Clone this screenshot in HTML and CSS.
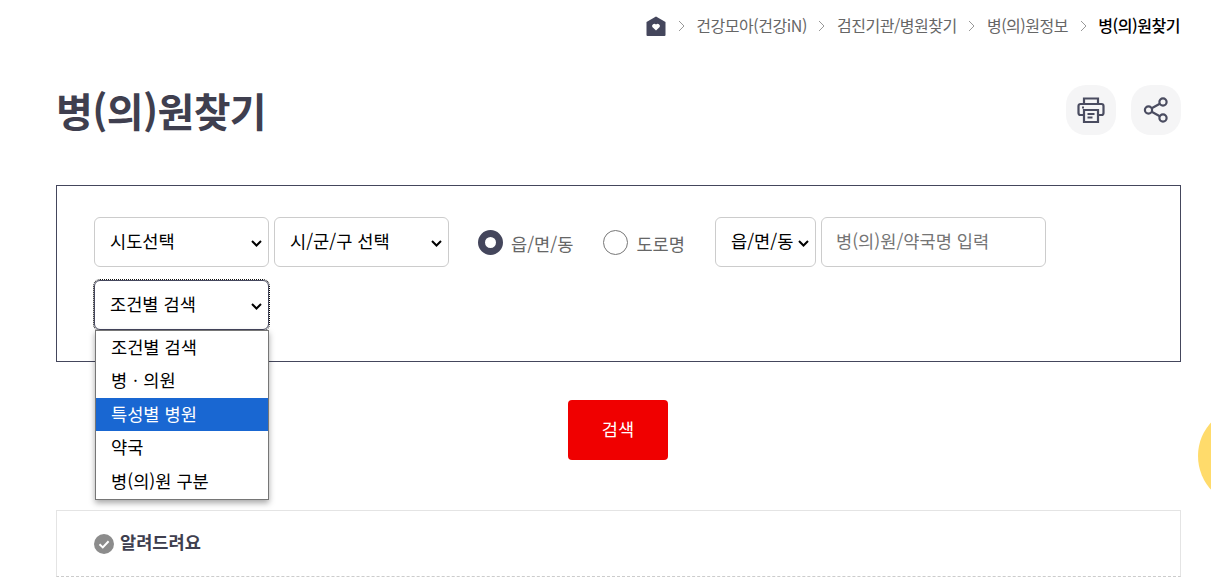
FILE: index.html
```html
<!DOCTYPE html>
<html lang="ko">
<head>
    <meta charset="UTF-8">
    <meta name="viewport" content="width=device-width, initial-scale=1.0">
    <title>병(의)원찾기</title>
    <link rel="stylesheet" href="styles.css">
</head>
<body>

<div class="container">
    <div class="breadcrumb">
        <svg class="home-icon" viewBox="0 0 20 20" width="20" height="20">
            <path d="M10 0.5 L19.5 6 V19 a1 1 0 0 1 -1 1 H1.5 a1 1 0 0 1 -1 -1 V6 Z" fill="#44465c"/>
            <path d="M10 14.6 L6.3 11 a2.3 2.3 0 0 1 3.7 -2.6 a2.3 2.3 0 0 1 3.7 2.6 Z" fill="#fff"/>
        </svg>
        <svg class="crumb-sep" viewBox="0 0 7 12" width="7" height="12"><path d="M1 1 L6 6 L1 11" fill="none" stroke="#999" stroke-width="1"/></svg>
        <span>건강모아(건강iN)</span>
        <svg class="crumb-sep" viewBox="0 0 7 12" width="7" height="12"><path d="M1 1 L6 6 L1 11" fill="none" stroke="#999" stroke-width="1"/></svg>
        <span>검진기관/병원찾기</span>
        <svg class="crumb-sep" viewBox="0 0 7 12" width="7" height="12"><path d="M1 1 L6 6 L1 11" fill="none" stroke="#999" stroke-width="1"/></svg>
        <span>병(의)원정보</span>
        <svg class="crumb-sep" viewBox="0 0 7 12" width="7" height="12"><path d="M1 1 L6 6 L1 11" fill="none" stroke="#999" stroke-width="1"/></svg>
        <span class="current">병(의)원찾기</span>
    </div>

    <div class="title-row">
        <h1>병(의)원찾기</h1>
        <div class="title-tools">
            <button class="tool-btn" aria-label="인쇄">
                <svg viewBox="0 0 28 28" width="28" height="28" fill="none" stroke="#4a4c60" stroke-width="2.2">
                    <path d="M7 8 V2.5 H21 V8"/>
                    <path d="M7 19 H3.5 a2 2 0 0 1 -2 -2 V10 a2 2 0 0 1 2 -2 H24.5 a2 2 0 0 1 2 2 V17 a2 2 0 0 1 -2 2 H21"/>
                    <path d="M7 14 H21 V26 H7 Z"/>
                    <path d="M10.5 18 H17.5 M10.5 21.5 H15.5" stroke-width="1.8"/>
                    <path d="M5 11.5 H7" stroke-width="1.8"/>
                </svg>
            </button>
            <button class="tool-btn" aria-label="공유">
                <svg viewBox="0 0 26 26" width="26" height="26" fill="none" stroke="#4a4c60" stroke-width="2.2">
                    <circle cx="5.5" cy="13" r="3.6"/>
                    <circle cx="20" cy="5" r="3.6"/>
                    <circle cx="20" cy="21" r="3.6"/>
                    <path d="M8.7 11.2 L16.8 6.8 M8.7 14.8 L16.8 19.2"/>
                </svg>
            </button>
        </div>
    </div>

    <div class="search-box">
        <select class="field w-175">
            <option>시도선택</option>
        </select>
        <select class="field w-175">
            <option>시/군/구 선택</option>
        </select>
        <div class="radio-group">
            <label class="radio-item"><input type="radio" name="addr" checked><span>읍/면/동</span></label>
            <label class="radio-item"><input type="radio" name="addr"><span>도로명</span></label>
        </div>
        <select class="field w-101">
            <option>읍/면/동</option>
        </select>
        <input class="field text-input" type="text" placeholder="병(의)원/약국명 입력">

        <div class="select-wrap">
            <select class="field w-175 focused">
                <option>조건별 검색</option>
            </select>
            <ul class="dropdown">
                <li>조건별 검색</li>
                <li>병ㆍ의원</li>
                <li class="active">특성별 병원</li>
                <li>약국</li>
                <li>병(의)원 구분</li>
            </ul>
        </div>
    </div>

    <div class="search-action">
        <button class="search-btn">검색</button>
    </div>

    <div class="notice">
        <svg viewBox="0 0 20 20" width="20" height="20">
            <circle cx="10" cy="10" r="10" fill="#8c8c8c"/>
            <path d="M5.5 10.3 L8.8 13.4 L14.6 7.3" fill="none" stroke="#fff" stroke-width="2"/>
        </svg>
        <strong>알려드려요</strong>
    </div>
</div>

<div class="float-circle"></div>

</body>
</html>
```

FILE: styles.css
```css
html, body {
    margin: 0;
    height: 577px;
    overflow: hidden;
}
body {
    font-family: "Noto Sans CJK KR", "Noto Sans", sans-serif;
    background-color: #fff;
    color: #000;
}
.container {
    padding: 0 30px 0 56px;
}
.breadcrumb {
    display: flex;
    justify-content: flex-end;
    align-items: center;
    gap: 10.5px;
    height: 20px;
    padding-top: 16px;
    font-size: 16px;
    letter-spacing: -0.45px;
    color: #666;
}
.breadcrumb span {
    padding-bottom: 2px;
}
.crumb-sep {
    margin: 0 1px;
}
.breadcrumb .current {
    color: #000;
    font-weight: 500;
    margin-right: 1px;
}
.title-row {
    display: flex;
    justify-content: space-between;
    align-items: center;
    height: 50px;
    margin-top: 49px;
}
h1 {
    margin: 0;
    padding-bottom: 1px;
    font-size: 40px;
    font-weight: 700;
    letter-spacing: -0.6px;
    color: #3f3f4f;
}
.title-tools {
    display: flex;
    gap: 15px;
}
.tool-btn {
    display: flex;
    justify-content: center;
    align-items: center;
    width: 50px;
    height: 50px;
    padding: 0;
    border: none;
    border-radius: 20px;
    background-color: #f5f5f6;
}
.search-box {
    display: flex;
    flex-wrap: wrap;
    align-items: center;
    align-content: flex-start;
    gap: 13px 5px;
    box-sizing: border-box;
    height: 177px;
    margin-top: 50px;
    padding: 31px 36px 0 37px;
    border: 1px solid #44465c;
}
.field {
    box-sizing: border-box;
    height: 50px;
    border: 1px solid #ccc;
    border-radius: 6px;
    background-color: #fff;
    color: #000;
    font-family: inherit;
    font-size: 17.6px;
}
select.field {
    appearance: none;
    padding: 0 0 3px 15px;
    background-image: url("data:image/svg+xml,%3Csvg xmlns='http://www.w3.org/2000/svg' width='11' height='7'%3E%3Cpath d='M1 1 L5.5 5.5 L10 1' fill='none' stroke='%23000' stroke-width='2'/%3E%3C/svg%3E");
    background-repeat: no-repeat;
    background-position: right 6px top 22px;
}
.w-175 {
    width: 175px;
}
.w-101 {
    width: 101px;
}
.text-input {
    width: 225px;
    padding: 0 14px 3px;
}
.text-input::placeholder {
    color: #757575;
}
select.focused {
    border-color: #44465c;
    outline: 1px dotted #111;
    outline-offset: 0;
}
.radio-group {
    display: flex;
    align-items: center;
    gap: 30px;
    margin: 0 25px 0 24px;
}
.radio-item {
    display: flex;
    align-items: center;
    gap: 8px;
    font-size: 17.6px;
    color: #666;
}
.radio-item span {
    padding-top: 3px;
}
.radio-item input {
    appearance: none;
    box-sizing: border-box;
    width: 25px;
    height: 25px;
    margin: 0;
    border: 1px solid #777;
    border-radius: 50%;
    background-color: #fff;
}
.radio-item input:checked {
    border: 7px solid #44465c;
}
.select-wrap {
    position: relative;
    width: 175px;
    height: 50px;
}
.dropdown {
    position: absolute;
    top: 50px;
    left: 1px;
    z-index: 5;
    box-sizing: border-box;
    width: 174px;
    height: 170px;
    margin: 0;
    padding: 0;
    list-style: none;
    border: 1px solid #767676;
    background-color: #fff;
    box-shadow: 0 3px 6px rgba(0, 0, 0, 0.35);
    font-size: 17.6px;
}
.dropdown li {
    height: 33.4px;
    line-height: 31px;
    padding-left: 15px;
}
.dropdown .active {
    background-color: #1967d2;
    color: #fff;
}
.search-action {
    display: flex;
    justify-content: center;
    margin-top: 38px;
    padding-right: 1px;
}
.search-btn {
    width: 100px;
    height: 60px;
    padding: 0 0 3px;
    border: none;
    border-radius: 4px;
    background-color: #f00000;
    color: #fff;
    font-family: inherit;
    font-size: 17.6px;
}
.notice {
    display: flex;
    align-items: center;
    gap: 6px;
    box-sizing: border-box;
    height: 67px;
    margin-top: 50px;
    padding: 0 37px;
    border: 1px solid #e4e4e4;
    border-bottom: 1px dashed #ccc;
    font-size: 17.6px;
    color: #3f3f4f;
}
.notice strong {
    padding-bottom: 4px;
}
.float-circle {
    position: fixed;
    top: 406px;
    left: 1198px;
    width: 100px;
    height: 100px;
    border-radius: 50%;
    background-color: #ffdb6b;
}
```
